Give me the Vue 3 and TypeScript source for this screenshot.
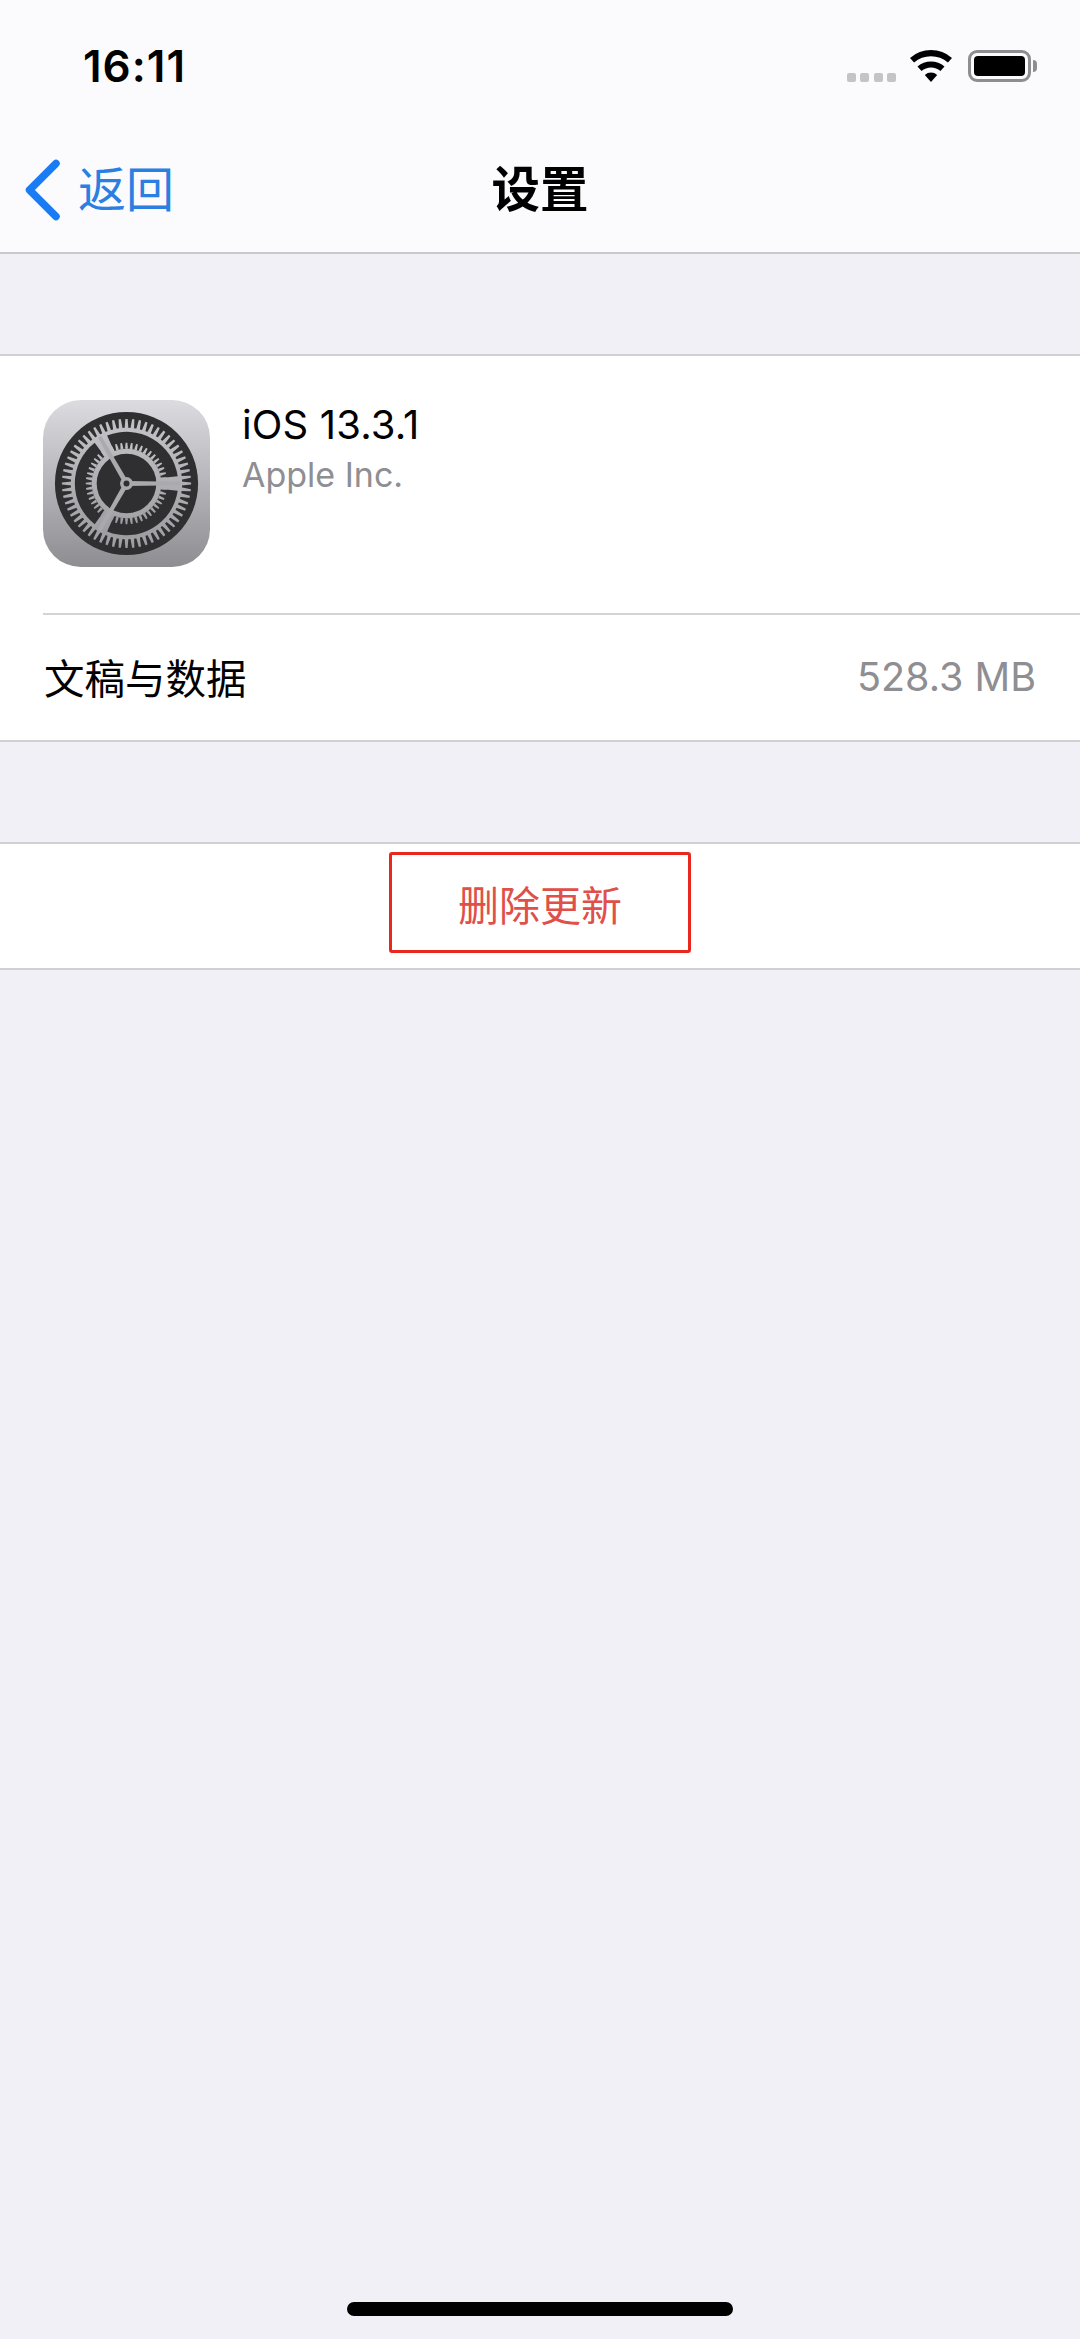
<script setup lang="ts">
import { computed } from 'vue'

const cx = 84
const cy = 84
const rad = (d: number) => (d * Math.PI) / 180
const pt = (r: number, a: number) => `${(cx + r * Math.cos(rad(a))).toFixed(2)} ${(cy + r * Math.sin(rad(a))).toFixed(2)}`

function teeth(count: number, r1: number, r2: number, half: number, tipHalf: number): string {
  let d = ''
  for (let i = 0; i < count; i++) {
    const a = (360 / count) * i
    d += `M${pt(r1, a - half)}L${pt(r2, a - tipHalf)}L${pt(r2, a + tipHalf)}L${pt(r1, a + half)}Z`
  }
  return d
}

function arc(rOuter: number, rInner: number, a1: number, a2: number): string {
  return `M${pt(rOuter, a1)}A${rOuter} ${rOuter} 0 0 1 ${pt(rOuter, a2)}L${pt(rInner, a2 - 1)}A${rInner} ${rInner} 0 0 0 ${pt(rInner, a1 + 1)}Z`
}

const outerTeeth = computed(() => teeth(60, 55, 65, 2.0, 1.0))
const innerTeeth = computed(() => teeth(48, 35, 41, 2.4, 1.2))
const arcs = computed(() => [0, 120, 240].map((o) => arc(52, 35, o + 8, o + 112)).join(''))
const spokes = [0, 120, 240]
</script>

<template>
  <div class="screen">
    <header class="top">
      <div class="status">
        <span class="time">16:11</span>
        <div class="indicators">
          <div class="signal"><i></i><i></i><i></i><i></i></div>
          <svg class="wifi" width="44" height="34" viewBox="0 0 42 33">
            <path d="M2.6 10.9A28 28 0 0 1 39.4 10.9" fill="none" stroke="#000" stroke-width="6" />
            <path d="M9.85 19.2A17 17 0 0 1 32.15 19.2" fill="none" stroke="#000" stroke-width="6" />
            <path d="M15 25.2A9 9 0 0 1 27 25.2L21 32Z" fill="#000" />
          </svg>
          <div class="battery"><div class="level"></div></div>
          <div class="tip"></div>
        </div>
      </div>
      <nav class="nav">
        <div class="back">
          <svg class="chevron" width="36" height="62" viewBox="0 0 36 62">
            <path d="M31 4.5L4.5 31L31 57.5" fill="none" stroke="#1a7cf5" stroke-width="7.5" stroke-linecap="round" stroke-linejoin="round" />
          </svg>
          <span>返回</span>
        </div>
        <div class="title">设置</div>
        <div></div>
      </nav>
    </header>

    <section class="group first">
      <div class="app">
        <svg class="app-icon" width="167" height="167" viewBox="0 0 168 168">
          <defs>
            <linearGradient id="tile" x1="0" y1="0" x2="0" y2="1">
              <stop offset="0" stop-color="#dcdce0" />
              <stop offset="1" stop-color="#8d8d92" />
            </linearGradient>
            <linearGradient id="metal" x1="0" y1="0" x2="0" y2="1">
              <stop offset="0" stop-color="#c2c2c6" />
              <stop offset="1" stop-color="#9c9ca1" />
            </linearGradient>
          </defs>
          <rect width="168" height="168" rx="38" fill="url(#tile)" />
          <circle cx="84" cy="84" r="72" fill="#2f2f32" />
          <circle cx="84" cy="84" r="56" fill="url(#metal)" />
          <path :d="outerTeeth" fill="url(#metal)" />
          <path :d="arcs" fill="#2f2f32" />
          <path :d="innerTeeth" fill="url(#metal)" />
          <circle cx="84" cy="84" r="30" fill="#2f2f32" />
          <g v-for="s in spokes" :key="s" :transform="`rotate(${s} 84 84)`">
            <path d="M84 81.5L138 82.2L138 85.8L84 86.5Z" fill="#aaaaae" />
          </g>
          <circle cx="84" cy="84" r="6.5" fill="#aaaaae" />
          <circle cx="84" cy="84" r="3" fill="#2f2f32" />
        </svg>
        <div class="app-text">
          <div class="app-name">iOS 13.3.1</div>
          <div class="app-vendor">Apple Inc.</div>
        </div>
      </div>
      <div class="data-row">
        <span class="data-label">文稿与数据</span>
        <span class="data-value">528.3 MB</span>
      </div>
    </section>

    <section class="group second">
      <div class="delete-box">删除更新</div>
    </section>

    <div class="home"></div>
  </div>
</template>

<style scoped>
.screen {
  width: 1080px;
  height: 2339px;
  background: #f1f0f6;
  display: flex;
  flex-direction: column;
  font-family: Inter, "Noto Sans CJK SC", sans-serif;
  color: #000;
  overflow: hidden;
}
.top {
  height: 254px;
  box-sizing: border-box;
  background: #fbfbfd;
  border-bottom: 2px solid #c9c9cd;
}
.status {
  height: 132px;
  box-sizing: border-box;
  padding: 0 43px 0 83px;
  display: flex;
  justify-content: space-between;
}
.time {
  font-size: 44px;
  font-weight: 600;
  line-height: 52px;
  margin-top: 40px;
  letter-spacing: 1px;
}
.indicators {
  display: flex;
  align-items: flex-start;
  padding-top: 49px;
}
.signal {
  display: flex;
  gap: 4.5px;
  margin-top: 24px;
  margin-right: 13px;
}
.signal i {
  width: 9px;
  height: 9px;
  border-radius: 2px;
  background: #c4c4c6;
}
.wifi {
  margin-right: 15px;
}
.battery {
  width: 63px;
  height: 32px;
  margin-top: 1px;
  box-sizing: border-box;
  border: 3px solid #8e8e91;
  border-radius: 9px;
  padding: 3px;
}
.level {
  height: 100%;
  background: #000;
  border-radius: 4px;
}
.tip {
  width: 4px;
  height: 12px;
  margin: 11px 0 0 2px;
  background: #8e8e91;
  border-radius: 0 6px 6px 0;
}
.nav {
  height: 120px;
  display: grid;
  grid-template-columns: 1fr auto 1fr;
  align-items: center;
  padding-bottom: 4px;
  box-sizing: border-box;
}
.back {
  display: flex;
  align-items: center;
  padding-left: 25px;
  color: #2a7fe0;
  font-size: 48px;
  line-height: 62px;
}
.chevron {
  margin-right: 17px;
}
.title {
  font-size: 48.5px;
  font-weight: 700;
  line-height: 62px;
}
.group {
  background: #fff;
  border-top: 2px solid #d0d0d4;
  border-bottom: 2px solid #d0d0d4;
}
.first {
  margin-top: 100px;
  height: 388px;
  box-sizing: border-box;
}
.app {
  height: 259px;
  box-sizing: border-box;
  margin-left: 43px;
  padding-top: 44px;
  display: flex;
  align-items: flex-start;
  border-bottom: 2px solid #d4d4d8;
}
.app-text {
  margin-left: 32px;
}
.app-name {
  font-size: 40px;
  line-height: 48px;
  margin-top: 1px;
  letter-spacing: 0.15px;
}
.app-vendor {
  font-size: 34px;
  line-height: 44px;
  margin-top: 4px;
  color: #8e8e93;
}
.data-row {
  height: 125px;
  padding: 0 44px;
  display: flex;
  justify-content: space-between;
  align-items: center;
}
.data-label {
  font-size: 40.5px;
  margin-top: -2px;
}
.data-value {
  font-size: 39.5px;
  color: #8e8e93;
  margin-top: -2px;
}
.second {
  margin-top: 100px;
  height: 128px;
  box-sizing: border-box;
  display: flex;
  justify-content: center;
  padding-top: 8px;
}
.delete-box {
  width: 302px;
  height: 101px;
  box-sizing: border-box;
  border: 3px solid #e8281e;
  border-radius: 3px;
  color: #e0504a;
  font-size: 41px;
  display: flex;
  align-items: center;
  justify-content: center;
}
.home {
  width: 386px;
  height: 14px;
  border-radius: 7px;
  background: #000;
  margin: auto auto 23px;
}
</style>
